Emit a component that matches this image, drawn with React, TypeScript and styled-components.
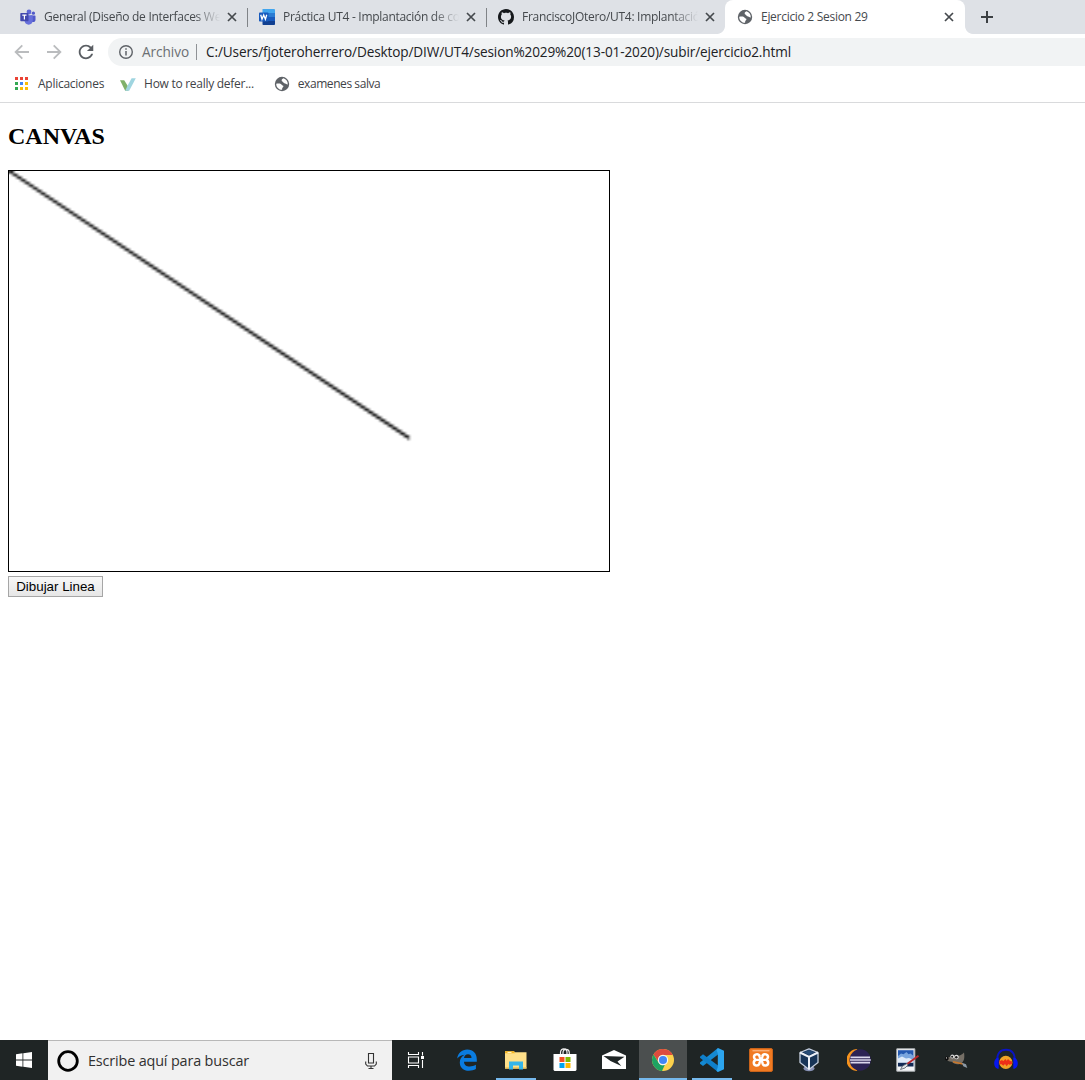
import React, { useEffect, useRef } from "react";
import styled, { createGlobalStyle, css } from "styled-components";

const uiFont = `"Open Sans", "Noto Sans", sans-serif`;

const GlobalStyle = createGlobalStyle`
  * { box-sizing: border-box; }
  html, body { margin: 0; padding: 0; overflow: hidden; background: #fff; }
`;

const Window = styled.div`
  display: flex;
  flex-direction: column;
  width: 100%;
  height: 1080px;
  background: #fff;
  font-family: ${uiFont};
`;

const Icon = styled.svg<{ $size?: number }>`
  display: block;
  flex: none;
  width: ${(p) => p.$size ?? 16}px;
  height: ${(p) => p.$size ?? 16}px;
`;

/* ---------- browser chrome ---------- */

const TabStrip = styled.div`
  display: flex;
  flex: none;
  height: 34px;
  padding-left: 9px;
  background: #dee1e6;
`;

const Tab = styled.div<{ $active?: boolean; $divided?: boolean }>`
  display: flex;
  align-items: center;
  flex: none;
  width: 239px;
  padding: 0 8px 0 11px;
  position: relative;
  ${(p) =>
    p.$divided &&
    css`
      background: linear-gradient(#808387, #808387) right 0 top 8px / 1px 19px no-repeat;
    `}
  ${(p) =>
    p.$active &&
    css`
      width: 240px;
      margin-left: -1px;
      padding: 0 8px 0 12px;
      background: #fff;
      border-radius: 8px 8px 0 0;
      &::before,
      &::after {
        content: "";
        position: absolute;
        bottom: 0;
        width: 8px;
        height: 8px;
      }
      &::before {
        left: -8px;
        background: radial-gradient(circle at 0 0, #dee1e6 7.5px, #fff 8.3px);
      }
      &::after {
        right: -8px;
        background: radial-gradient(circle at 100% 0, #dee1e6 7.5px, #fff 8.3px);
      }
    `}
`;

const TabTitle = styled.span<{ $fade?: boolean }>`
  flex: 1;
  margin-left: 8px;
  overflow: hidden;
  white-space: nowrap;
  font-size: 12px;
  line-height: 18px;
  letter-spacing: -0.29px;
  color: #45494d;
  ${(p) =>
    p.$fade &&
    css`
      mask-image: linear-gradient(to right, #000 calc(100% - 26px), transparent);
    `}
`;

const TabClose = styled.span`
  display: flex;
  flex: none;
  margin-left: 4px;
`;

const NewTab = styled.div`
  display: flex;
  align-items: center;
  margin-left: 14px;
`;

const Toolbar = styled.div`
  display: flex;
  align-items: center;
  flex: none;
  height: 36px;
  padding-left: 12px;
`;

const NavButton = styled.span`
  display: flex;
  margin-right: 12px;
`;

const Omnibox = styled.div`
  display: flex;
  align-items: center;
  flex: 1;
  height: 28px;
  padding-left: 10px;
  border-radius: 14px 0 0 14px;
  background: #f1f3f4;
  font-size: 13.6px;
  line-height: 20px;
  white-space: nowrap;
`;

const Scheme = styled.span`
  margin-left: 8px;
  letter-spacing: -0.05px;
  color: #6b6f73;
`;

const SchemeDivider = styled.span`
  width: 1px;
  height: 16px;
  margin: 0 9px 0 7px;
  background: #8f9296;
`;

const Address = styled.span`
  letter-spacing: -0.13px;
  color: #202124;
`;

const BookmarkBar = styled.div`
  display: flex;
  align-items: center;
  flex: none;
  height: 33px;
  padding: 0 0 4px 13px;
  border-bottom: 1px solid #d9dadc;
`;

const Bookmark = styled.div<{ $after: number; $gap?: number; $track: number }>`
  display: flex;
  align-items: center;
  gap: ${(p) => p.$gap ?? 8}px;
  margin-right: ${(p) => p.$after}px;
  white-space: nowrap;
  font-size: 12px;
  line-height: 18px;
  letter-spacing: ${(p) => p.$track}px;
  color: #3f4347;
`;

/* ---------- page ---------- */

const Page = styled.main`
  flex: 1;
  padding: 0 8px;
`;

const Heading = styled.h2`
  margin: 20px 0;
  font: bold 24px/27px "Liberation Serif", serif;
  color: #000;
`;

const Drawing = styled.canvas`
  display: block;
  width: 602px;
  height: 402px;
  border: 1px solid #000;
`;

const DrawButton = styled.button`
  display: block;
  width: 95px;
  height: 21px;
  margin-top: 4px;
  padding: 0;
  border: 1px solid #a6a6a6;
  border-radius: 0;
  background: linear-gradient(#f8f8f8, #e6e6e6);
  font: 13.333px/17px "Liberation Sans", Arial, sans-serif;
  color: #000;
`;

/* ---------- taskbar ---------- */

const Taskbar = styled.footer`
  display: flex;
  flex: none;
  height: 40px;
  background: #1f2525;
`;

const Slot = styled.div<{ $gap?: number; $lit?: boolean; $open?: "part" | "full" }>`
  display: flex;
  align-items: center;
  justify-content: center;
  flex: none;
  width: 48px;
  height: 40px;
  margin-left: ${(p) => p.$gap ?? 1}px;
  background-color: ${(p) => (p.$lit ? "#4b4f4f" : "transparent")};
  ${(p) =>
    p.$open &&
    css`
      background-image: linear-gradient(#76b9ed, #76b9ed);
      background-repeat: no-repeat;
      background-position: center bottom;
      background-size: ${p.$open === "full" ? 48 : 40}px 2px;
    `}
`;

const Search = styled.div`
  display: flex;
  align-items: center;
  flex: none;
  width: 344px;
  padding: 0 13px 0 8px;
  border-top: 1px solid #b8b8b8;
  background: #f1f1f1;
`;

const SearchText = styled.span`
  flex: 1;
  margin-left: 8px;
  white-space: nowrap;
  font-size: 14.4px;
  line-height: 20px;
  letter-spacing: -0.15px;
  color: #303030;
`;

/* ---------- icons ---------- */

const Teams = () => (
  <Icon viewBox="0 0 16 16">
    <circle cx="13.4" cy="4.2" r="1.6" fill="#5059c9" />
    <path d="M10.5 6.4h4.3c.4 0 .7.3.7.7v3.6c0 1.4-1 2.4-2.4 2.4h-2.6z" fill="#5059c9" />
    <circle cx="9" cy="3" r="2.4" fill="#5f68d6" />
    <path d="M5.2 6.2h6.9c.4 0 .7.3.7.7v4.4c0 2.5-1.7 4.4-4.1 4.4s-4.2-1.9-4.2-4.4V6.9c0-.4.3-.7.7-.7z" fill="#666fdb" />
    <rect x="0.3" y="4" width="8.2" height="8.2" rx=".7" fill="#4349ae" />
    <path d="M2.3 6.1h4.2M4.4 6.1v4.3" stroke="#fff" strokeWidth="1.2" />
  </Icon>
);

const Word = () => (
  <Icon viewBox="0 0 16 16">
    <path d="M3.5 0h11.7c.4 0 .8.3.8.8V4H3.5z" fill="#41a5ee" />
    <path d="M3.5 4H16v4H3.5z" fill="#2b7cd3" />
    <path d="M3.5 8H16v4H3.5z" fill="#185abd" />
    <path d="M3.5 12H16v3.2c0 .4-.4.8-.8.8H4.3a.8.8 0 0 1-.8-.8z" fill="#103f91" />
    <rect x="0" y="3.5" width="9.5" height="9" rx=".8" fill="#185abd" />
    <path d="M1.7 5.7l1.3 4.6L4.7 6l1.7 4.3 1.3-4.6" fill="none" stroke="#fff" strokeWidth="1.3" />
  </Icon>
);

const Github = () => (
  <Icon viewBox="0 0 16 16">
    <path
      fill="#15181b"
      d="M8 0C3.58 0 0 3.58 0 8c0 3.54 2.29 6.53 5.47 7.59.4.07.55-.17.55-.38 0-.19-.01-.82-.01-1.49-2.01.37-2.53-.49-2.69-.94-.09-.23-.48-.94-.82-1.13-.28-.15-.68-.52-.01-.53.63-.01 1.08.58 1.23.82.72 1.21 1.87.87 2.33.66.07-.52.28-.87.51-1.07-1.78-.2-3.64-.89-3.64-3.95 0-.87.31-1.59.82-2.15-.08-.2-.36-1.02.08-2.12 0 0 .67-.21 2.2.82.64-.18 1.32-.27 2-.27s1.36.09 2 .27c1.53-1.04 2.2-.82 2.2-.82.44 1.1.16 1.92.08 2.12.51.56.82 1.27.82 2.15 0 3.07-1.87 3.75-3.65 3.95.29.25.54.73.54 1.48 0 1.07-.01 1.93-.01 2.2 0 .21.15.46.55.38A8.01 8.01 0 0 0 16 8c0-4.42-3.58-8-8-8z"
    />
  </Icon>
);

const Globe = () => (
  <Icon viewBox="0 0 16 16">
    <circle cx="8" cy="8" r="7.2" fill="#5f6368" />
    <path
      d="M9.5 2.3C8.3 2.8 7.5 3.5 7.7 4.7c.2.9 1.1.6 1.4 1.4.3.9 1 1.3 2 1.4 1.2.1 1.100 1 2.700.9.1-2.800-1.600-5.200-4.300-6.100z"
      fill="#fff"
    />
    <path
      d="M2.200 7.700c1.700-.2 3.400-.4 4.700.3.900.5.700 1.300 1.800 1.500 1 .2.900 1.200.2 1.700-.7.500-.8 1.100-.8 2.600-3.300 0-5.900-2.600-5.900-6.100z"
      fill="#fff"
    />
  </Icon>
);

const Cross = () => (
  <Icon viewBox="0 0 16 16">
    <path d="M4 4l8 8M12 4l-8 8" stroke="#45494d" strokeWidth="1.7" />
  </Icon>
);

const Plus = () => (
  <Icon viewBox="0 0 16 16">
    <path d="M8 2v12M2 8h12" stroke="#3c4043" strokeWidth="2" />
  </Icon>
);

const Back = ({ flip }: { flip?: boolean }) => (
  <Icon $size={20} viewBox="0 0 20 20">
    <path
      d="M17 10H4.5M10.3 3.3L3.6 10l6.7 6.7"
      transform={flip ? "translate(20 0) scale(-1 1)" : undefined}
      fill="none"
      stroke="#babcbe"
      strokeWidth="1.8"
    />
  </Icon>
);

const Reload = () => (
  <Icon $size={20} viewBox="1 1 22 22">
    <path
      fill="#5a5e63"
      d="M17.65 6.35C16.2 4.9 14.21 4 12 4c-4.42 0-7.99 3.58-7.99 8s3.57 8 7.99 8c3.73 0 6.84-2.55 7.73-6h-2.08c-.82 2.33-3.04 4-5.65 4-3.31 0-6-2.69-6-6s2.69-6 6-6c1.66 0 3.14.69 4.22 1.78L13 11h7V4l-2.35 2.35z"
    />
  </Icon>
);

const Info = () => (
  <Icon viewBox="0 0 16 16">
    <circle cx="8" cy="8" r="6.3" fill="none" stroke="#5f6368" strokeWidth="1.4" />
    <path d="M8 7v4.6M8 4.3v1.5" stroke="#5f6368" strokeWidth="1.5" />
  </Icon>
);

const appColours = ["#ea4335", "#ea4335", "#ea4335", "#34a853", "#4285f4", "#fbbc05", "#34a853", "#fbbc05", "#fbbc05"];

const Apps = () => (
  <Icon viewBox="0 0 16 16">
    {appColours.map((colour, i) => (
      <rect key={i} x={2 + (i % 3) * 5} y={1 + Math.floor(i / 3) * 5} width="3" height="3" fill={colour} />
    ))}
  </Icon>
);

const Check = () => (
  <Icon viewBox="0 0 16 16">
    <path d="M0 4.300h4.200L7.500 9.500l1 5.300H5.200z" fill="#7fb069" />
    <path d="M15.800 2.200h-4.200L7.800 9.300 5.200 14.800h4z" fill="#9fd5e0" />
  </Icon>
);

const Start = () => (
  <Icon viewBox="0 0 16 16">
    <path d="M0 2.200L6.500 1.300V7.600H0zM7.300 1.200L16 0v7.600H7.300zM0 8.400h6.500v6.300L0 13.800zM7.300 8.400H16V16l-8.700-1.200z" fill="#fff" />
  </Icon>
);

const Cortana = () => (
  <Icon $size={24} viewBox="0 0 24 24">
    <circle cx="12" cy="12" r="9.3" fill="none" stroke="#000" strokeWidth="2.8" />
  </Icon>
);

const Mic = () => (
  <Icon viewBox="0 0 16 16">
    <path d="M5.500.5h5v9.500h-5zM2.700 8.500v2.500l1.800 2h7l1.800-2V8.500M8 13v2.500M5.500 15.500h5" fill="none" stroke="#333" strokeWidth="1.100" />
  </Icon>
);

const TaskView = () => (
  <Icon $size={18} viewBox="0 0 18 18">
    <path d="M1.500 1v2.500h10V1M1.500 17v-2.500h10V17M1.500 6h10v6h-10zM15.500 1v3.500M15.500 9v8" fill="none" stroke="#fff" strokeWidth="1.100" />
    <rect x="14" y="5" width="3" height="3" fill="#fff" />
  </Icon>
);

const Edge = () => (
  <Icon $size={22} viewBox="0 0 22 22">
    <path
      fill="#0a7ce0"
      d="M1.200 9.600C2 4.100 5.800.6 11.300.6c5.800 0 9.500 4 9.500 9.600v2.500H8c.2 3.300 2.500 4.800 5.700 4.800 2.300 0 4.300-.6 6.200-1.700v4.300c-2 1.100-4.300 1.600-6.900 1.600-5.700 0-9.200-3.200-9.200-8.300 0-3.400 1.700-6 4.700-7.600-3.400.4-5.700 1.800-7.300 3.800zM8 8.900h7.500c0-2.400-1.300-3.700-3.500-3.700-2.300 0-3.600 1.500-4 3.700z"
    />
  </Icon>
);

const Explorer = () => (
  <Icon $size={22} viewBox="0 0 22 22">
    <path d="M0 3.300V2.300h9l1 1H21.500V19.500H0z" fill="#ffe08a" />
    <path d="M0 2.300h9l1 2H0z" fill="#f2b321" />
    <path d="M2.500 3h4v1h-4z" fill="#fff4c8" />
    <path d="M0 18.200h21.500v1.500H0z" fill="#ecc55e" />
    <path d="M4 20.500v-8h14v8h-4v-4H8v4z" fill="#35b5e9" />
  </Icon>
);

const Store = () => (
  <Icon $size={24} viewBox="0 0 24 24">
    <path d="M7.500 7V4.500C7.500 2 9 .8 10.800.8S14 2 14 4.500V7M10 6.500V4.800c0-2.300 1.300-3.500 3-3.500s3.300 1.200 3.300 3.500V6.500" fill="none" stroke="#f0f0f0" strokeWidth="1.200" />
    <path d="M.5 6H23.500V22l-1 1H1.500l-1-1z" fill="#fff" />
    <path d="M6.500 9h5v5h-5z" fill="#f25022" />
    <path d="M12.500 9h5v5h-5z" fill="#7fba00" />
    <path d="M6.500 15h5v5h-5z" fill="#00a4ef" />
    <path d="M12.500 15h5v5h-5z" fill="#ffb900" />
  </Icon>
);

const Mail = () => (
  <Icon $size={24} viewBox="0 0 24 24">
    <path d="M0 21V7.500L12 2l12 5.500V21z" fill="#fff" />
    <path d="M1.500 8L22.500 8.800 15.500 13.500l3.800 4.500L8.500 13z" fill="#1f2525" />
  </Icon>
);

const Chrome = () => (
  <Icon $size={24} viewBox="0 0 24 24">
    <circle cx="12" cy="12" r="11" fill="#fdd14c" />
    <path d="M2.500 6.500A11 11 0 0 1 21.700 7H12a5 5 0 0 0-4.500 7z" fill="#dd4b3e" />
    <path d="M2.500 6.500l5 8A5 5 0 0 0 14 16.600L11 23A11 11 0 0 1 2.500 6.500z" fill="#1da362" />
    <circle cx="12" cy="12" r="5.200" fill="#f4f5f5" />
    <circle cx="12" cy="12" r="4" fill="#4285f4" />
  </Icon>
);

const Code = () => (
  <Icon $size={24} viewBox="0 0 24 24">
    <path d="M18 0v6.500L3 18 0 15.800v-1.200z" fill="#1489d2" />
    <path d="M0 8.800L3 6.200 18 17.500V24L0 9.800z" fill="#0f7fca" />
    <path d="M18 0l6 2.700v18.600L18 24l-1.500-1 1.300-4V5.500L16.500 2z" fill="#2ca5ef" />
  </Icon>
);

const Xampp = () => (
  <Icon $size={24} viewBox="0 0 24 24">
    <rect x=".5" y=".5" width="23" height="23" rx="1.5" fill="#f07a22" stroke="#c9631a" />
    <path d="M3.500 2.800h17" stroke="#ffc79a" />
    <path
      d="M10.300 7.300C9 5.500 5 6 5 9c0 1.500.8 2.300 2 2.800-1.400.5-2.200 1.500-2.200 3 0 3.200 4.400 3.500 5.400 1.200.6-1.500.2-3 1.800-3s1.200 1.500 1.800 3c1 2.300 5.400 2 5.400-1.200 0-1.500-.8-2.500-2.200-3 1.200-.5 2-1.300 2-2.800 0-3-4-3.500-5.300-1.700"
      fill="none"
      stroke="#fff"
      strokeWidth="2.500"
      strokeLinecap="round"
    />
    <path d="M10.300 7.500c.5 1.800 0 3 1.700 3s1.200-1.200 1.700-3M8 11.800h8" fill="none" stroke="#fff" strokeWidth="2.300" />
  </Icon>
);

const VirtualBox = () => (
  <Icon $size={24} viewBox="0 0 24 24">
    <ellipse cx="11" cy="20.500" rx="5.500" ry="2.800" fill="#8791b5" />
    <path d="M2 4.500L11 .8l9 3.700v10L11 21.500 2 14.500z" fill="#173457" stroke="#c4cede" strokeWidth="1.300" strokeLinejoin="round" />
    <path d="M2 4.500L11 9l9-4.500M11 9v12.500" fill="none" stroke="#edf1f8" strokeWidth="2" />
    <path d="M5.500 4.300L11 2.300l5.500 2L11 7z" fill="#254b77" />
  </Icon>
);

const Eclipse = () => (
  <Icon $size={24} viewBox="0 0 24 24">
    <path d="M10.500 1a11 11 0 0 0 0 22A16 16 0 0 1 10.500 1z" fill="#f7941e" />
    <circle cx="13.200" cy="12" r="10.700" fill="#2c2255" />
    <path d="M3.500 9.300h19.500M3 12h20.800M3.500 14.700h19.500" stroke="#dcd7ee" strokeWidth="1.700" />
  </Icon>
);

const Picture = () => (
  <Icon $size={24} viewBox="0 0 24 24">
    <path d="M.8.800h18v22.400H.8z" fill="#f4f5f7" stroke="#b4b8bc" />
    <path d="M2 2.200h15.500V15H2z" fill="#2459b0" />
    <path d="M2 8l3-2.500 2.500.8 3-2.300 2 2.200 2-.7 3 2.500V15H2z" fill="#7aa6de" />
    <path d="M2 10.500l4-2 4 2 3-.5 4.500 2V15H2z" fill="#dfebf9" />
    <path d="M2 14.800h15.500v3.700H2z" fill="#122a55" />
    <path d="M10.500 16.500L22.500 7.800" stroke="#b9262c" strokeWidth="1.900" />
    <path d="M11 15.500L6.500 18l-2 3.500 4.500-1.500 3-3z" fill="#dfe3e6" stroke="#56606a" strokeWidth=".8" />
  </Icon>
);

const Gimp = () => (
  <Icon $size={24} viewBox="0 0 24 24">
    <path d="M2.500 9.500c3.500 0 5.500-2.500 8-1.800 3 .8 6-.7 8.500-3.200.8 4.500.5 9.500-3.500 11.200-4 1.300-7 0-8.500-2-2 .3-4-.7-5-1.700z" fill="#756f66" />
    <circle cx="1.800" cy="10.500" r="1.900" fill="#0c0c0c" />
    <circle cx="1.500" cy="9.900" r=".6" fill="#ddd" />
    <circle cx="7.300" cy="8.500" r="1.900" fill="#dcdcdc" />
    <circle cx="11.500" cy="9" r="2.300" fill="#dcdcdc" />
    <circle cx="7.100" cy="8.700" r="1" fill="#171717" />
    <circle cx="11.300" cy="9.200" r="1.200" fill="#171717" />
    <path d="M8 13.800l10 2.200" stroke="#c9772a" strokeWidth="1.400" />
    <path d="M17 14.800l4 1.500 1.300 3.700-4-1.800z" fill="#8c99a5" />
  </Icon>
);

const Audacity = () => (
  <Icon $size={24} viewBox="0 0 24 24">
    <circle cx="11.800" cy="14.300" r="6.600" fill="#f0a426" />
    <path d="M5.700 15l2-1 1.500 1.500 2-2 1.500 2 1.500-2 1.500 1.500 2.300-.5" fill="none" stroke="#ee2f17" strokeWidth="3.200" />
    <path d="M3.300 13C2.800 5.500 6 1.800 12 1.800s9.200 3.700 8.700 11.200" fill="none" stroke="#0a14c4" strokeWidth="1.900" />
    <path d="M4.700 9.500v11.200C1.500 20.700.2 18 .2 15.200s1.500-5.400 4.500-5.700zM19.300 9.500v11.200c3.200 0 4.500-2.700 4.500-5.500s-1.500-5.400-4.500-5.700z" fill="#0717ef" />
  </Icon>
);

/* ---------- app ---------- */

function LineCanvas() {
  const ref = useRef<HTMLCanvasElement>(null);
  useEffect(() => {
    const ctx = ref.current?.getContext("2d");
    if (!ctx) return;
    ctx.clearRect(0, 0, 300, 150);
    ctx.lineWidth = 1.1;
    ctx.beginPath();
    ctx.moveTo(0, 0);
    ctx.lineTo(200.3, 100.15);
    ctx.stroke();
  }, []);
  return <Drawing ref={ref} width={300} height={150} />;
}

const tabs = [
  { icon: <Teams />, title: "General (Diseño de Interfaces Web)", divided: true },
  { icon: <Word />, title: "Práctica UT4 - Implantación de contenido", divided: true },
  { icon: <Github />, title: "FranciscoJOtero/UT4: Implantación", divided: false },
];

export default function App() {
  return (
    <Window>
      <GlobalStyle />
      <TabStrip>
        {tabs.map((tab) => (
          <Tab key={tab.title} $divided={tab.divided}>
            {tab.icon}
            <TabTitle $fade>{tab.title}</TabTitle>
            <TabClose>
              <Cross />
            </TabClose>
          </Tab>
        ))}
        <Tab $active>
          <Globe />
          <TabTitle>Ejercicio 2 Sesion 29</TabTitle>
          <TabClose>
            <Cross />
          </TabClose>
        </Tab>
        <NewTab>
          <Plus />
        </NewTab>
      </TabStrip>
      <Toolbar>
        <NavButton>
          <Back />
        </NavButton>
        <NavButton>
          <Back flip />
        </NavButton>
        <NavButton>
          <Reload />
        </NavButton>
        <Omnibox>
          <Info />
          <Scheme>Archivo</Scheme>
          <SchemeDivider />
          <Address>C:/Users/fjoteroherrero/Desktop/DIW/UT4/sesion%2029%20(13-01-2020)/subir/ejercicio2.html</Address>
        </Omnibox>
      </Toolbar>
      <BookmarkBar>
        <Bookmark $after={16} $gap={9} $track={-0.26}>
          <Apps />
          Aplicaciones
        </Bookmark>
        <Bookmark $after={20} $track={-0.28}>
          <Check />
          How to really defer...
        </Bookmark>
        <Bookmark $after={0} $track={-0.43}>
          <Globe />
          examenes salva
        </Bookmark>
      </BookmarkBar>
      <Page>
        <Heading>CANVAS</Heading>
        <LineCanvas />
        <DrawButton>Dibujar Linea</DrawButton>
      </Page>
      <Taskbar>
        <Slot $gap={0}>
          <Start />
        </Slot>
        <Search>
          <Cortana />
          <SearchText>Escribe aquí para buscar</SearchText>
          <Mic />
        </Search>
        <Slot $gap={0}>
          <TaskView />
        </Slot>
        <Slot $gap={3}>
          <Edge />
        </Slot>
        <Slot $open="part">
          <Explorer />
        </Slot>
        <Slot>
          <Store />
        </Slot>
        <Slot>
          <Mail />
        </Slot>
        <Slot $lit $open="full">
          <Chrome />
        </Slot>
        <Slot $open="part">
          <Code />
        </Slot>
        <Slot>
          <Xampp />
        </Slot>
        <Slot>
          <VirtualBox />
        </Slot>
        <Slot>
          <Eclipse />
        </Slot>
        <Slot>
          <Picture />
        </Slot>
        <Slot>
          <Gimp />
        </Slot>
        <Slot>
          <Audacity />
        </Slot>
      </Taskbar>
    </Window>
  );
}
